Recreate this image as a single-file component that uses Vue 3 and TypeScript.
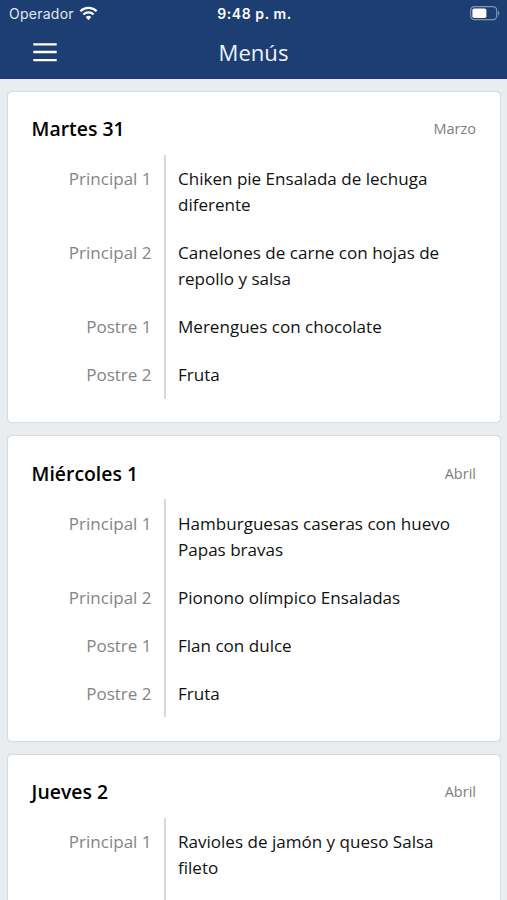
<script setup lang="ts">
interface Dish { label: string; lines: string[] }
interface Day { title: string; month: string; dishes: Dish[] }

const days: Day[] = [
  {
    title: 'Martes 31',
    month: 'Marzo',
    dishes: [
      { label: 'Principal 1', lines: ['Chiken pie Ensalada de lechuga', 'diferente'] },
      { label: 'Principal 2', lines: ['Canelones de carne con hojas de', 'repollo y salsa'] },
      { label: 'Postre 1', lines: ['Merengues con chocolate'] },
      { label: 'Postre 2', lines: ['Fruta'] },
    ],
  },
  {
    title: 'Miércoles 1',
    month: 'Abril',
    dishes: [
      { label: 'Principal 1', lines: ['Hamburguesas caseras con huevo', 'Papas bravas'] },
      { label: 'Principal 2', lines: ['Pionono olímpico Ensaladas'] },
      { label: 'Postre 1', lines: ['Flan con dulce'] },
      { label: 'Postre 2', lines: ['Fruta'] },
    ],
  },
  {
    title: 'Jueves 2',
    month: 'Abril',
    dishes: [
      { label: 'Principal 1', lines: ['Ravioles de jamón y queso Salsa', 'fileto'] },
    ],
  },
]
</script>

<template>
  <div class="screen">
    <header class="top">
      <div class="status">
        <div class="carrier">
          <span>Operador</span>
          <svg class="wifi" width="19" height="15" viewBox="0 0 20 15" fill="none" stroke="#fff" stroke-width="2.3">
            <path d="M1.4 5.1a12.3 12.3 0 0 1 17.2 0" />
            <path d="M4.6 8.6a7.7 7.7 0 0 1 10.8 0" />
            <path d="M10 14.5 7.1 11.3a4.3 4.3 0 0 1 5.8 0Z" fill="#fff" stroke="none" />
          </svg>
        </div>
        <div class="clock">9:48 p. m.</div>
        <svg class="battery" width="30" height="15" viewBox="0 0 30 15">
          <rect x="0.7" y="0.7" width="26" height="13" rx="3.6" fill="none" stroke="#8492b0" stroke-width="1.2" />
          <rect x="2.4" y="2.4" width="14" height="9.6" rx="1.8" fill="#fff" />
          <path d="M28 5v4.6c1.8-.6 1.8-4 0-4.6Z" fill="#8492b0" />
        </svg>
      </div>
      <div class="nav">
        <svg class="menu" width="24" height="20" viewBox="0 0 24 20" stroke="#fff" stroke-width="2.3">
          <path d="M.3 2.3h23.4M.3 10h23.4M.3 18.1h23.4" />
        </svg>
        <h1>Menús</h1>
        <span></span>
      </div>
    </header>
    <main>
      <section v-for="day in days" :key="day.title" class="card">
        <div class="heading">
          <h2>{{ day.title }}</h2>
          <span class="month">{{ day.month }}</span>
        </div>
        <div v-for="dish in day.dishes" :key="dish.label" class="row">
          <div class="label">{{ dish.label }}</div>
          <div class="dish"><div v-for="line in dish.lines" :key="line">{{ line }}</div></div>
        </div>
      </section>
    </main>
  </div>
</template>

<style>
body { margin: 0; background: #e9edf0; }
</style>

<style scoped>
.screen { height: 900px; overflow: hidden; background: #e9edf0; font-family: "Open Sans", sans-serif; color: #111; }
.top { height: 79px; background: #1d3e73; color: #fff; }
.status { height: 27px; display: grid; grid-template-columns: 1fr auto 1fr; align-items: center; padding: 0 7px 0 9px; font-family: Inter, sans-serif; font-size: 14px; box-sizing: border-box; }
.carrier { display: flex; align-items: center; gap: 5px; letter-spacing: 0.25px; color: #e3e8f0; }
.clock { font-weight: 600; letter-spacing: 0.6px; }
.battery { justify-self: end; }
.nav { height: 50px; display: grid; grid-template-columns: 1fr auto 1fr; align-items: center; padding: 0 33px; }
h1 { margin: 0; font-size: 22.1px; font-weight: 400; line-height: 30px; color: #eef2f8; }
main { display: flex; flex-direction: column; gap: 12px; padding: 12px 6px; }
.card { background: #fff; border: 1px solid #d9dddf; box-shadow: 0 0 1px #cfd3d6; border-radius: 5px; padding: 24px 24px 23px 23.6px; margin: 0 0 0 1px; }
.heading { display: flex; justify-content: space-between; align-items: center; height: 26px; margin-bottom: 13px; }
h2 { margin: 0; font-size: 19.4px; font-weight: 600; line-height: 26px; color: #000; }
.month { font-size: 14.5px; line-height: 20px; color: #808080; }
.row { display: flex; font-size: 17.06px; line-height: 26px; }
.label { width: 120px; text-align: right; color: #858585; padding: 11px 0; margin-right: 12.4px; }
.dish { flex: 1; border-left: 2px solid #d8d8d8; padding: 11px 0 11px 12px; white-space: nowrap; }
.card:nth-child(2) { padding-top: 25px; padding-bottom: 24px; }
.card:nth-child(2) .heading { margin-bottom: 12px; }
.card:nth-child(2) .label { padding: 12px 0 10px; }
.card:nth-child(2) .dish { padding: 12px 0 10px 12px; }
.card:last-child .row { min-height: 96px; }
</style>
